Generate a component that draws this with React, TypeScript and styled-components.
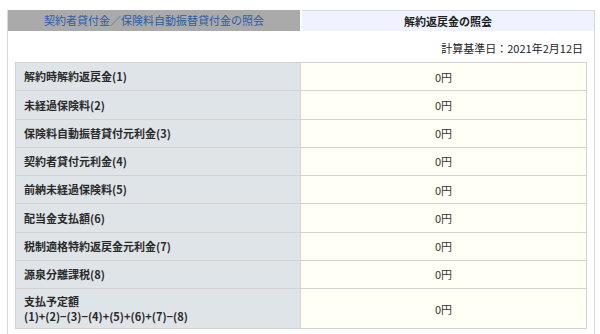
import React from "react";
import styled, { createGlobalStyle } from "styled-components";

const Global = createGlobalStyle`
  html, body { margin: 0; padding: 0; background: #ffffff; }
  body { font-family: "Noto Sans CJK JP", "Noto Sans", sans-serif; color: #333; }
`;

const Page = styled.div`
  padding: 10px 5px 0 7px;
`;

const Panel = styled.div`
  width: 586px;
  min-height: 324px;
  border-left: 1px solid #d9d9d9;
  border-right: 1px solid #d9d9d9;
  box-sizing: content-box;
`;

const Tabs = styled.div`
  display: flex;
  gap: 2px;
  height: 21px;
`;

const Tab = styled.div<{ $active?: boolean }>`
  flex: 1;
  display: flex;
  align-items: center;
  justify-content: center;
  font-size: 11px;
  line-height: 21px;
  box-sizing: border-box;
  background: ${(p) => (p.$active ? "#eef3ff" : "#aaaaaa")};
  color: ${(p) => (p.$active ? "#222" : "#2d5ca8")};
  font-weight: ${(p) => (p.$active ? 700 : 400)};
  border-top: ${(p) => (p.$active ? "1px solid #d6dde8" : "none")};
`;

const Content = styled.div`
  padding: 0 8px 0 7px;
`;

const DateLine = styled.div`
  text-align: right;
  font-size: 11px;
  line-height: 14px;
  padding: 10px 3px 0 0;
  height: 31px;
  box-sizing: border-box;
  color: #222;
`;

const Table = styled.table`
  width: 571px;
  border-collapse: collapse;
  table-layout: fixed;
  border: 1px solid #d6d6d6;
`;

const Col = styled.col<{ $w: number }>`
  width: ${(p) => p.$w}px;
`;

const Row = styled.tr<{ $tall?: boolean }>`
  height: ${(p) => (p.$tall ? "40px" : "28.25px")};
`;

const Label = styled.th`
  background: #dfe4e8;
  border: 1px solid #d3d3d3;
  text-align: left;
  font-size: 11px;
  line-height: 14.5px;
  font-weight: 700;
  padding: 0 8px;
  color: #2a2a2a;
  box-sizing: border-box;
`;

const Value = styled.td`
  background: #fffff6;
  border: 1px solid #d3d3d3;
  text-align: center;
  font-size: 11px;
  line-height: 14px;
  padding: 0;
  color: #333;
  box-sizing: border-box;
`;

const rows = [
  "解約時解約返戻金(1)",
  "未経過保険料(2)",
  "保険料自動振替貸付元利金(3)",
  "契約者貸付元利金(4)",
  "前納未経過保険料(5)",
  "配当金支払額(6)",
  "税制適格特約返戻金元利金(7)",
  "源泉分離課税(8)",
];

export default function App() {
  return (
    <>
      <Global />
      <Page>
        <Panel>
          <Tabs>
            <Tab>契約者貸付金／保険料自動振替貸付金の照会</Tab>
            <Tab $active>解約返戻金の照会</Tab>
          </Tabs>
          <Content>
            <DateLine>計算基準日：2021年2月12日</DateLine>
            <Table>
              <colgroup>
                <Col $w={285} />
                <Col $w={286} />
              </colgroup>
              <tbody>
                {rows.map((r) => (
                  <Row key={r}>
                    <Label>{r}</Label>
                    <Value>0円</Value>
                  </Row>
                ))}
                <Row $tall>
                  <Label>
                    支払予定額
                    <br />
                    (1)+(2)−(3)−(4)+(5)+(6)+(7)−(8)
                  </Label>
                  <Value>0円</Value>
                </Row>
              </tbody>
            </Table>
          </Content>
        </Panel>
      </Page>
    </>
  );
}
